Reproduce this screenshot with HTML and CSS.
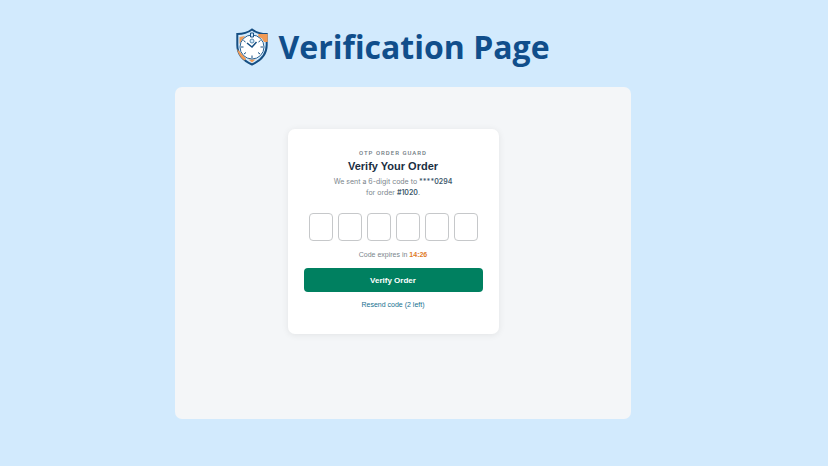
FILE: index.html
```
<!DOCTYPE html>
<html lang="en">
<head>
    <meta charset="UTF-8">
    <meta name="viewport" content="width=device-width, initial-scale=1.0">
    <title>Verification Page</title>
    <link rel="stylesheet" href="styles.css">
</head>
<body>
    <header class="page-header">
        <svg class="logo" viewBox="0 0 32 38" aria-hidden="true">
            <path d="M16 1.5 C12 4.5 7 6 1.3 6 V17 C1.3 26 7 32.5 16 36.5 C25 32.5 30.7 26 30.7 17 V6 C25 6 20 4.5 16 1.5 Z" fill="#d2eafd" stroke="#164f83" stroke-width="2"/>
            <path d="M22.5 6 L31.7 6 V14 L28 14 L26 10.5 L22 8.5 Z" fill="#f09a55"/>
            <path d="M3.5 9 L9 8 L6 12 L3.5 16 Z" fill="#f09a55"/>
            <path d="M1 21 L5 25 L10 30.5 L8.5 32.5 C4.5 29.5 2 26 1 21 Z" fill="#f09a55"/>
            <path d="M12.5 31.5 H19.5 L16 34.5 Z" fill="#f09a55"/>
            <circle cx="16" cy="19" r="12" fill="#fff" stroke="#2c6393" stroke-width="1"/>
            <path d="M14.5 5 H17.5 V9 H14.5 Z" fill="#d2eafd" stroke="#164f83"/>
            <path d="M16 27.5 V30 M5 19 H7.5 M24.5 19 H27 M7.5 12.5 L9.5 14 M24.5 12.5 L22.5 14 M8 26 L10 24.5 M24 26 L22 24.5" stroke="#164f83"/>
            <circle cx="16" cy="13" r="2" fill="#d2eafd" stroke="#5688ad"/>
            <path d="M11 15 L16 19 L20.5 14" fill="none" stroke="#164f83" stroke-width="1.5"/>
        </svg>
        <h1>Verification Page</h1>
    </header>

    <main class="panel">
        <form class="card">
            <p class="eyebrow">OTP ORDER GUARD</p>
            <h2>Verify Your Order</h2>
            <p class="message">We sent a 6-digit code to <strong>****0294</strong><br>for order <strong>#1020</strong>.</p>

            <div class="code-inputs">
                <input type="text" inputmode="numeric" maxlength="1" aria-label="Digit 1">
                <input type="text" inputmode="numeric" maxlength="1" aria-label="Digit 2">
                <input type="text" inputmode="numeric" maxlength="1" aria-label="Digit 3">
                <input type="text" inputmode="numeric" maxlength="1" aria-label="Digit 4">
                <input type="text" inputmode="numeric" maxlength="1" aria-label="Digit 5">
                <input type="text" inputmode="numeric" maxlength="1" aria-label="Digit 6">
            </div>

            <p class="expiry">Code expires in <strong>14:26</strong></p>
            <button type="submit" class="button">Verify Order</button>
            <a href="#" class="resend">Resend code (2 left)</a>
        </form>
    </main>
</body>
</html>
```

FILE: styles.css
```
* {
    box-sizing: border-box;
}
body {
    margin: 0;
    min-height: 100vh;
    padding: 24px 22px 47px 0;
    display: flex;
    flex-direction: column;
    align-items: center;
    background-color: #d2eafd;
    font-family: "Liberation Sans", Arial, sans-serif;
}
h1, h2, p {
    margin: 0;
}
.page-header {
    width: 100%;
    max-width: 456px;
    padding-right: 20px;
    margin-bottom: 17px;
    display: flex;
    align-items: center;
    justify-content: center;
    gap: 10px;
}
.page-header h1 {
    font-family: "Open Sans", sans-serif;
    font-size: 32px;
    line-height: 46px;
    font-weight: 700;
    color: #104e8b;
    white-space: nowrap;
}
.logo {
    width: 32px;
    height: 38px;
    flex-shrink: 0;
}
.panel {
    flex: 1;
    width: 100%;
    max-width: 456px;
    padding: 42px 20px 42px 0;
    display: flex;
    justify-content: center;
    align-items: flex-start;
    background-color: #f4f6f8;
    border-radius: 7px;
}
.card {
    width: 100%;
    max-width: 211px;
    padding: 19px 16px 24px;
    display: flex;
    flex-direction: column;
    align-items: center;
    text-align: center;
    background-color: white;
    border-radius: 7px;
    box-shadow: 0 1px 7px rgba(0,0,0,0.08);
}
.eyebrow {
    font-family: Roboto, sans-serif;
    font-size: 6px;
    line-height: 10px;
    font-weight: 500;
    letter-spacing: 1px;
    color: #6f7a82;
}
.card h2 {
    font-size: 11px;
    line-height: 16px;
    font-weight: 700;
    color: #1a2e42;
}
.message {
    margin-top: 2px;
    font-family: Inter, sans-serif;
    font-size: 7px;
    line-height: 11px;
    color: #7b858c;
}
.message strong {
    font-weight: 600;
    color: #3e5a6c;
}
.code-inputs {
    display: flex;
    gap: 5px;
    margin-top: 15px;
}
.code-inputs input {
    width: 24px;
    height: 28px;
    padding: 0;
    border: 1px solid #c6c8ca;
    border-radius: 4px;
    background-color: white;
    font-size: 12px;
    text-align: center;
}
.expiry {
    margin-top: 8px;
    font-size: 7px;
    line-height: 11px;
    color: #7b858c;
}
.expiry strong {
    color: #e07b28;
}
.button {
    width: 100%;
    height: 24px;
    margin-top: 8px;
    padding: 0;
    border: none;
    border-radius: 4px;
    background-color: #008060;
    color: white;
    font-family: inherit;
    font-size: 8px;
    font-weight: 700;
    cursor: pointer;
}
.button:hover {
    background-color: #006e52;
}
.resend {
    margin-top: 7px;
    font-size: 7px;
    line-height: 11px;
    color: #16708f;
    text-decoration: none;
}
```
